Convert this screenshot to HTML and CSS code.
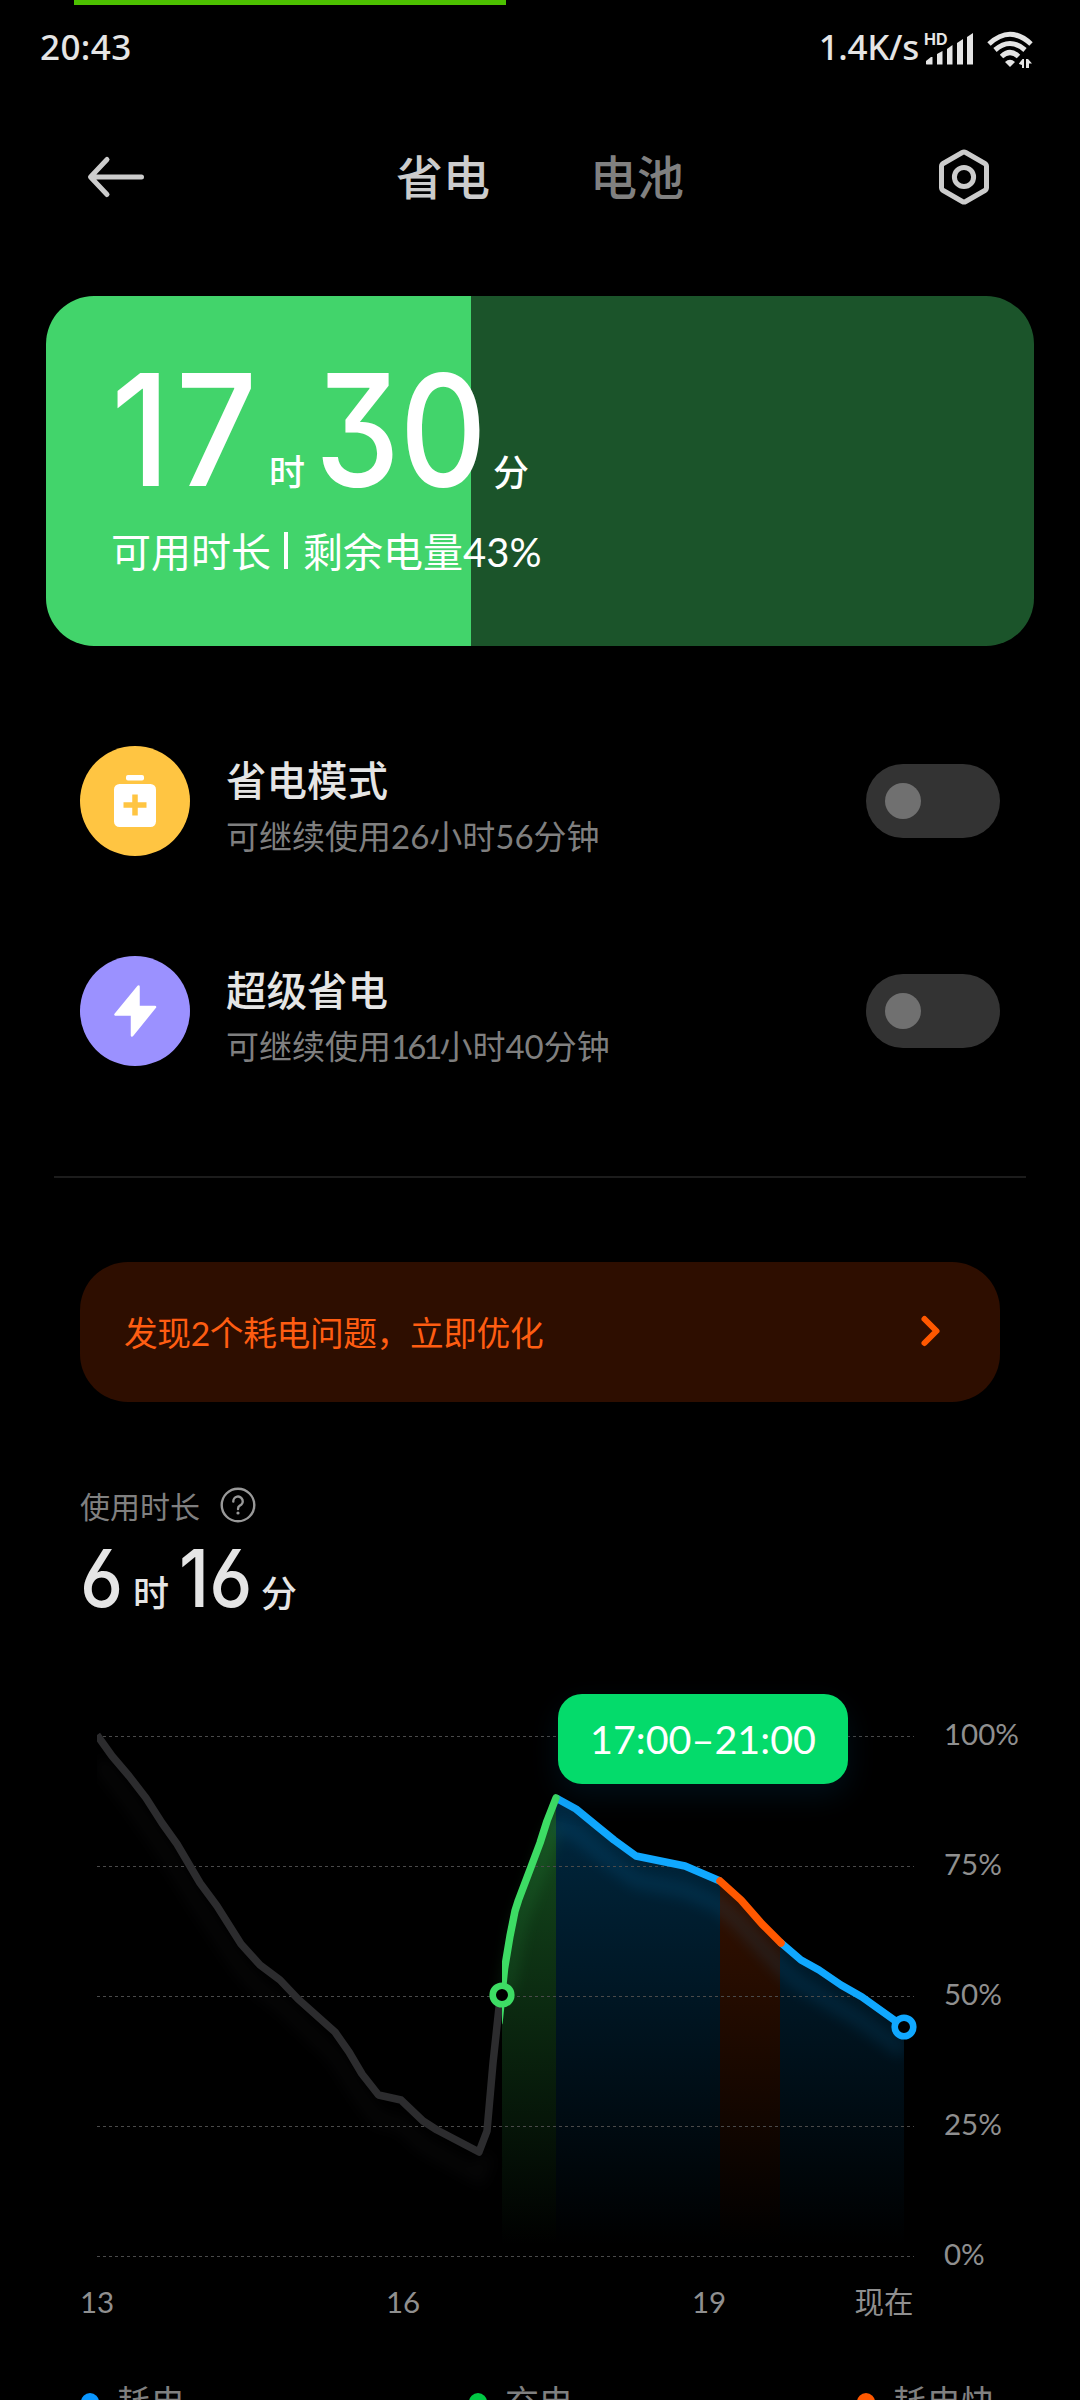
FILE: index.html
```html
<!DOCTYPE html>
<html lang="zh-CN">
<head>
    <meta charset="UTF-8">
    <meta name="viewport" content="width=device-width, initial-scale=1.0">
    <title>省电与电池</title>
    <link rel="stylesheet" href="styles.css">
</head>
<body>
    <div class="top-line"></div>

    <!-- Status bar -->
    <div class="status-bar">
        <span class="clock">20:43</span>
        <div class="status-right">
            <span class="speed">1.4K/s</span>
            <svg class="signal" width="50" height="36" viewBox="0 0 50 36">
                <text class="hd" x="0" y="14">HD</text>
                <path d="M2 33V30L7 26H8.500V33.500H2.500ZM13 33.500V23L18.500 20V33.500ZM23 33.500V18L28.500 14V33.500ZM33 33.500V12L39 8V33.500ZM43 33.500V6L49 2V33.500Z"/>
            </svg>
            <svg class="wifi" width="48" height="38" viewBox="0 0 48 38">
                <path class="arc" d="M3 14Q24 -5.500 45 14M9 20Q24 7 39 20M15.500 26.500Q24 18.500 32.500 26.500"/>
                <path d="M19 32Q24 27.500 29 32L24 37Z"/>
                <path d="M33 33.500L36.500 29H38V38H36V35L33 34ZM40 29H42L46 33.500H43V38H40Z"/>
            </svg>
        </div>
    </div>

    <!-- Header -->
    <header class="header">
        <svg class="back" width="58" height="42" viewBox="0 0 58 42">
            <path d="M20 3.500L3.500 21L20 38.500M4 21H54.500"/>
        </svg>
        <nav class="tabs">
            <a class="tab active">省电</a>
            <a class="tab">电池</a>
        </nav>
        <svg class="settings" width="54" height="58" viewBox="0 0 54 58">
            <path d="M25.300 4.500Q27 3.500 28.700 4.500L47.800 15.500Q49.500 16.500 49.500 18.500V39.500Q49.500 41.500 47.800 42.500L28.700 53.500Q27 54.500 25.300 53.500L6.200 42.500Q4.500 41.500 4.500 39.500V18.500Q4.500 16.500 6.200 15.500Z"/>
            <circle cx="27" cy="29" r="9.600"/>
        </svg>
    </header>

    <!-- Remaining battery -->
    <section class="battery">
        <div class="battery-time">
            <span class="big n17">17</span><span class="unit">时</span>
            <span class="big n30">30</span><span class="unit">分</span>
        </div>
        <p class="battery-info">可用时长<i class="bar"></i>剩余电量43%</p>
    </section>

    <!-- Power saving modes -->
    <section class="modes">
        <div class="mode">
            <svg class="mode-icon" width="110" height="110" viewBox="0 0 110 110">
                <circle cx="55" cy="55" r="55" fill="#ffc542"/>
                <rect x="46" y="29" width="18" height="5.500" rx="2" fill="#fff"/>
                <rect x="34" y="38" width="42" height="43" rx="5.500" fill="#fff"/>
                <path d="M55 48.500V69.500M43.500 59H66.500" stroke="#ffc542" stroke-width="5.500" fill="none"/>
            </svg>
            <div class="mode-text">
                <h3>省电模式</h3>
                <p>可继续使用26小时56分钟</p>
            </div>
            <span class="switch"></span>
        </div>
        <div class="mode">
            <svg class="mode-icon" width="110" height="110" viewBox="0 0 110 110">
                <circle cx="55" cy="55" r="55" fill="#9b91ff"/>
                <path d="M58.500 30.500L35.500 58.500H52V79.500L75 51H58.500Z" fill="#fff" stroke="#fff" stroke-width="2.500" stroke-linejoin="round"/>
            </svg>
            <div class="mode-text">
                <h3>超级省电</h3>
                <p>可继续使用<span class="tight">161</span>小时40分钟</p>
            </div>
            <span class="switch"></span>
        </div>
    </section>

    <hr class="divider">

    <a class="alert">
        <span>发现2个耗电问题，立即优化</span>
        <svg width="22" height="34" viewBox="0 0 22 34">
            <path d="M4.500 5L16.500 17L4.500 29"/>
        </svg>
    </a>

    <!-- Screen time -->
    <section class="usage">
        <div class="usage-label">
            <span>使用时长</span>
            <svg width="36" height="36" viewBox="0 0 36 36">
                <circle cx="18" cy="18" r="16.300"/>
                <path d="M13.300 14.600A4.700 4.700 0 1 1 19.800 18.600Q18 19.500 18 22"/>
                <circle class="dot" cx="18" cy="26" r="1.600"/>
            </svg>
        </div>
        <div class="usage-time">
            <span class="mid n6">6</span><span class="unit">时</span>
            <span class="mid n16">16</span><span class="unit">分</span>
        </div>
    </section>

    <!-- Battery level chart -->
    <section class="chart">
        <svg width="1080" height="660" viewBox="0 1680 1080 660">
            <defs>
                <linearGradient id="fillGreen" gradientUnits="userSpaceOnUse" x1="0" y1="1798" x2="0" y2="2245">
                    <stop offset="0" stop-color="#154e1f"/>
                    <stop offset="1" stop-color="#154e1f" stop-opacity="0"/>
                </linearGradient>
                <linearGradient id="fillBlue" gradientUnits="userSpaceOnUse" x1="0" y1="1798" x2="0" y2="2245">
                    <stop offset="0" stop-color="#002840"/>
                    <stop offset="1" stop-color="#002840" stop-opacity="0"/>
                </linearGradient>
                <linearGradient id="fillOrange" gradientUnits="userSpaceOnUse" x1="0" y1="1798" x2="0" y2="2245">
                    <stop offset="0" stop-color="#401500"/>
                    <stop offset="1" stop-color="#401500" stop-opacity="0"/>
                </linearGradient>
                <filter id="soft" filterUnits="userSpaceOnUse" x="60" y="1680" width="900" height="620">
                    <feGaussianBlur stdDeviation="7"/>
                </filter>
                <clipPath id="plot"><rect x="97" y="1700" width="807" height="560"/></clipPath>
                <clipPath id="selected"><rect x="502" y="1700" width="420" height="560"/></clipPath>
            </defs>

            <!-- areas under the curve -->
            <path fill="url(#fillGreen)" d="M502 2252V2010L504.500 1969L510 1936L518 1900L531 1867L547 1821L556 1798V2252Z"/>
            <path fill="url(#fillBlue)" d="M556 2252V1798L576 1809L598 1827L614 1840L636 1856L685 1866L720 1881V2252Z"/>
            <path fill="url(#fillOrange)" d="M720 2252V1881L741 1900L762 1924L780 1942V2252Z"/>
            <path fill="url(#fillBlue)" d="M780 2252V1942L801 1960L819 1970L841 1985L862 1997L904 2027V2252Z"/>

            <!-- glow below the line -->
            <g clip-path="url(#plot)">
                <g class="glow" filter="url(#soft)" transform="translate(0 24)">
                    <path stroke="#3a3a3c" d="M99 1737L129 1776L162 1823L200 1883L241 1944L260 1965L280 1980L335 2032L362 2074L378 2095L401 2100L423 2121L479 2152L487 2131"/>
                    <path stroke="#3ddc64" d="M506 1969L518 1900L547 1821L556 1798"/>
                    <path stroke="#10a8ff" d="M556 1798L576 1809L614 1840L636 1856L685 1866L720 1881L741 1900L782 1944L801 1960L862 1997L904 2027"/>
                </g>
            </g>

            <path class="grid" d="M97 1736.500H914M97 1866.500H914M97 1996.500H914M97 2126.500H914M97 2256.500H914"/>

            <path class="line" stroke="#2c2c2e" clip-path="url(#plot)" d="M97 1735L112 1756L129 1776L146 1798L162 1823L177 1844L200 1883L217 1906L241 1944L260 1965L280 1980L298 1999L335 2032L349 2052L362 2074L378.500 2095L401 2100L423 2121L437 2130L479 2152L487 2131L493 2063L499.500 2003"/>
            <path class="line" stroke="#10a8ff" d="M556 1798L576 1809L598 1827L614 1840L636 1856L685 1866L720 1881"/>
            <path class="line" stroke="#10a8ff" d="M780 1942L801 1960L819 1970L841 1985L862 1997L904 2027"/>
            <path class="line" stroke="#ff5800" stroke-linecap="round" d="M720 1881L741 1900L762 1924L781 1943"/>
            <path class="line" stroke="#3ddc64" stroke-linecap="round" clip-path="url(#selected)" d="M499 2022L504.500 1969L510 1936L515 1911L518.500 1900L531 1867L540 1843L547 1821L556 1798"/>

            <circle class="knob" cx="502" cy="1995" r="9.300" stroke="#3ddc64"/>
            <circle class="knob" cx="904" cy="2027" r="9.300" stroke="#10a8ff"/>

            <g class="axis">
                <text x="944" y="1745">100%</text>
                <text x="944" y="1875">75%</text>
                <text x="944" y="2005">50%</text>
                <text x="944" y="2135">25%</text>
                <text x="944" y="2265">0%</text>
            </g>
            <g class="axis hours">
                <text x="97" y="2313">13</text>
                <text x="403" y="2313">16</text>
                <text x="709" y="2313">19</text>
                <text x="884" y="2313">现在</text>
            </g>
        </svg>
        <div class="tooltip">17:00–21:00</div>
    </section>

    <div class="legend">
        <span class="blue">耗电</span>
        <span class="green">充电</span>
        <span class="orange">耗电快</span>
    </div>
</body>
</html>
```

FILE: styles.css
```css
/* Global Styling */
* {
    box-sizing: border-box;
    margin: 0;
    padding: 0;
}

body {
    position: relative;
    width: 1080px;
    height: 2400px;
    overflow: hidden;
    background: #000;
    color: #e5e5e5;
    font-family: Lato, "Noto Sans CJK SC", sans-serif;
}

svg {
    display: block;
    flex-shrink: 0;
    overflow: visible;
}

.top-line {
    position: absolute;
    top: 0;
    left: 74px;
    width: 432px;
    height: 5px;
    background: #4cc000;
}

/* Status Bar */
.status-bar {
    display: flex;
    justify-content: space-between;
    align-items: center;
    height: 97px;
    padding: 0 46px 0 40px;
    font-family: "Noto Sans", sans-serif;
    font-size: 35px;
    font-weight: 500;
    line-height: 40px;
}

.clock,
.speed {
    padding-bottom: 3px;
}

.clock {
    letter-spacing: 0.4px;
}

.status-right {
    display: flex;
    align-items: center;
}

.speed {
    margin-right: 5px;
    letter-spacing: -0.3px;
}

.signal {
    margin-right: 12px;
    fill: #e5e5e5;
}

.hd {
    font: bold 16px Inter, sans-serif;
}

.wifi {
    fill: #e5e5e5;
}

.wifi .arc {
    fill: none;
    stroke: #e5e5e5;
    stroke-width: 5;
}

/* Header */
.header {
    display: flex;
    justify-content: space-between;
    align-items: center;
    height: 159px;
    padding: 0 89px 0 87px;
}

.back,
.settings {
    fill: none;
    stroke: #ccc;
    stroke-width: 5;
    stroke-linecap: round;
    stroke-linejoin: round;
}

.tabs {
    display: flex;
    gap: 100px;
    padding: 0 2px 5px 0;
    font-size: 47px;
    font-weight: 500;
}

.tab {
    color: #808080;
}

.tab.active {
    color: #ccc;
}

/* Battery Card */
.battery {
    height: 350px;
    margin: 40px 46px 0;
    padding: 52px 66px 0 65px;
    border-radius: 48px;
    background: linear-gradient(to right, #42d46b 43%, #1b542a 43%);
    color: #fff;
}

.battery-time,
.usage-time {
    display: flex;
    align-items: baseline;
}

.battery-time {
    height: 166px;
}

.big,
.mid {
    font-family: Inter, sans-serif;
    font-weight: 500;
    font-feature-settings: "cv09", "cv03", "cv04";
    transform: scaleX(0.87);
    transform-origin: left;
}

.big {
    font-size: 155px;
    line-height: 164px;
}

.n17 {
    width: 158px;
    letter-spacing: 6px;
    transform: scaleX(0.92);
}

.n30 {
    width: 178px;
}

.unit {
    width: 46px;
    font-size: 36px;
    font-weight: 500;
}

.battery-info {
    display: flex;
    align-items: center;
    height: 72px;
    font-size: 40px;
}

.bar {
    width: 4px;
    height: 37px;
    margin: 0 15px 0 13px;
    background: #fff;
}

/* Power Modes */
.modes {
    display: flex;
    flex-direction: column;
    gap: 100px;
    padding: 100px 80px 110px;
}

.mode {
    display: flex;
    align-items: center;
    height: 110px;
}

.mode-text {
    flex: 1;
    margin-left: 36px;
    padding-top: 11px;
}

.mode-text h3 {
    font-size: 40.5px;
    font-weight: 500;
    line-height: 58px;
}

.mode-text p {
    color: #7f7f7f;
    font-size: 33px;
    line-height: 52px;
}

.tight {
    letter-spacing: -3px;
}

.switch {
    width: 134px;
    height: 74px;
    padding: 19px;
    border-radius: 37px;
    background: #333;
}

.switch::before {
    content: "";
    display: block;
    width: 36px;
    height: 36px;
    border-radius: 50%;
    background: #707070;
}

.divider {
    height: 2px;
    margin: 0 54px;
    border: 0;
    background: #1c1c1c;
}

/* Alert */
.alert {
    display: flex;
    justify-content: space-between;
    align-items: center;
    height: 140px;
    margin: 84px 80px 80px;
    padding: 0 58px 2px 44px;
    border-radius: 48px;
    background: #2e0e00;
    color: #ff5d12;
    font-size: 33.7px;
    letter-spacing: -0.35px;
}

.alert svg {
    fill: none;
    stroke: #ff5800;
    stroke-width: 6;
    stroke-linecap: round;
    stroke-linejoin: round;
}

/* Usage */
.usage {
    height: 198px;
    padding: 0 80px;
}

.usage-label {
    display: flex;
    align-items: center;
    gap: 20px;
    height: 46px;
    color: #808080;
    font-size: 30px;
}

.usage-label svg {
    fill: none;
    stroke: #999;
    stroke-width: 2.4;
    stroke-linecap: round;
}

.usage-label .dot {
    fill: #999;
    stroke: none;
}

.mid {
    font-size: 80px;
    line-height: 100px;
    transform: scaleX(0.91);
}

.n6 {
    width: 53px;
}

.n16 {
    width: 82px;
}

/* Chart */
.chart {
    position: relative;
    height: 660px;
}

.grid {
    stroke: #4a4a4a;
    stroke-width: 1;
    stroke-dasharray: 3 3;
}

.line {
    fill: none;
    stroke-width: 7.5;
    stroke-linejoin: round;
}

.glow {
    fill: none;
    stroke-width: 16;
    opacity: 0.1;
}

.knob {
    fill: #000;
    stroke-width: 6.6;
}

.axis {
    fill: #8f8f8f;
    font-size: 29.5px;
}

.hours {
    text-anchor: middle;
}

.tooltip {
    position: absolute;
    top: 14px;
    left: 558px;
    width: 290px;
    height: 90px;
    border-radius: 24px;
    background: #04db6b;
    box-shadow: 0 12px 30px rgba(0, 50, 80, 0.3);
    color: #fff;
    font-size: 39.5px;
    line-height: 89px;
    text-align: center;
}

/* Legend */
.legend {
    display: flex;
    height: 60px;
    padding-left: 81px;
    color: #808080;
    font-size: 34px;
    line-height: 126px;
}

.legend span {
    display: flex;
    align-items: center;
    width: 388px;
    height: 124px;
    flex-shrink: 0;
}

.legend .orange {
    width: 200px;
}

.legend span::before {
    content: "";
    width: 18px;
    height: 18px;
    margin-right: 18px;
    border-radius: 50%;
}

.legend .blue::before {
    background: #0a97ff;
}

.legend .green::before {
    background: #00c944;
}

.legend .orange::before {
    background: #ff5800;
}
```
